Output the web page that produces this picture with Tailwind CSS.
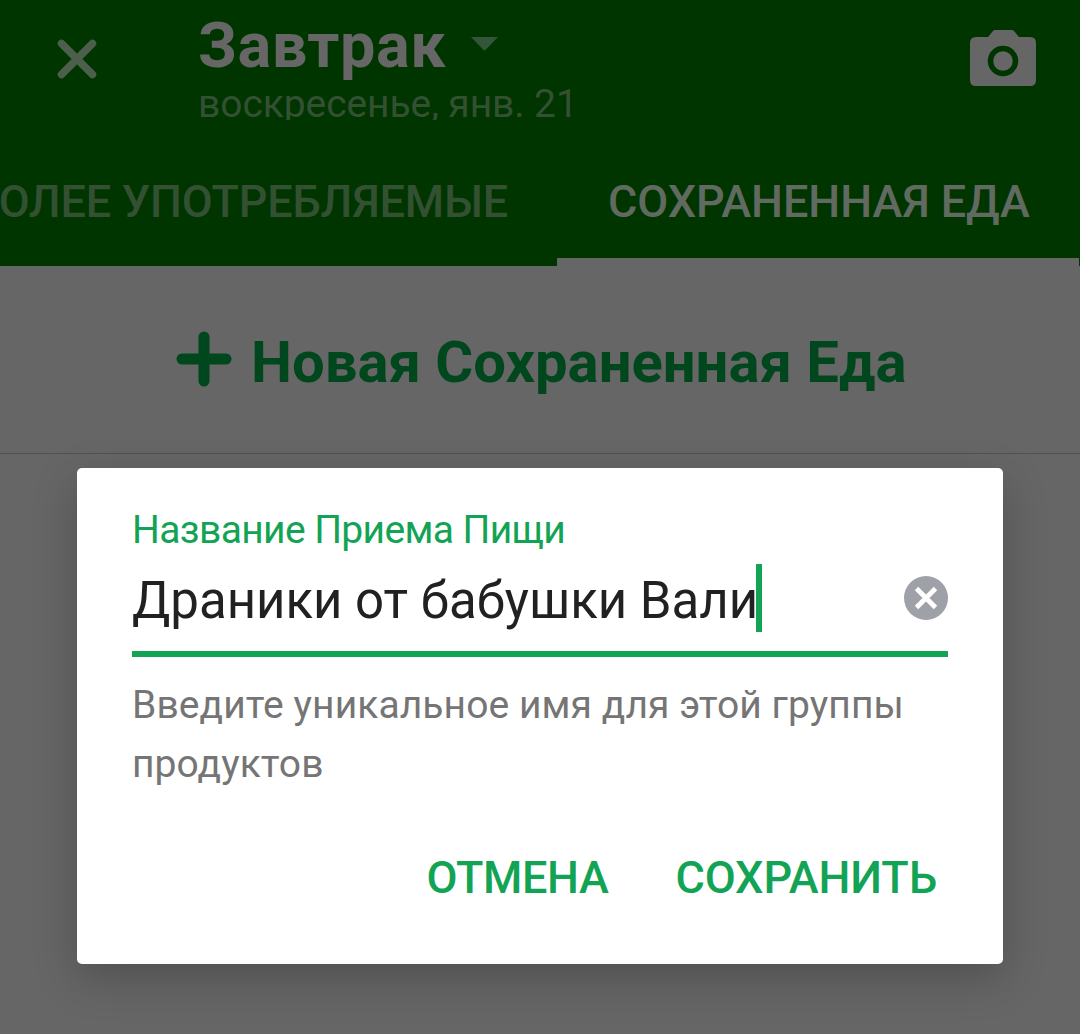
<!DOCTYPE html>
<html lang="ru">
<head>
    <meta charset="UTF-8">
    <meta name="viewport" content="width=device-width, initial-scale=1.0">
    <title>Завтрак</title>
    <script src="https://cdn.jsdelivr.net/npm/@tailwindcss/browser@4"></script>
    <style>
        body {
            font-family: Roboto, 'Noto Sans', sans-serif;
        }
    </style>
</head>
<body class="bg-[#666] h-[1034px] overflow-hidden relative">

    <!-- App bar -->
    <header class="bg-[#003500] h-[266px] flex flex-col">
        <div class="flex h-[120px] overflow-hidden">
            <button class="w-[198px] pl-[57px] pt-[39px] flex items-start">
                <svg class="w-10 h-10" viewBox="0 0 40 40" fill="none" stroke="#4c5f4c" stroke-width="7.500" stroke-linecap="round">
                    <path d="M4.500 4.500 35.500 35.500M35.500 4.500 4.500 35.500"/>
                </svg>
            </button>
            <div class="grow pt-[9px]">
                <div class="flex">
                    <h1 class="text-[63px] leading-[74px] tracking-[0.5px] font-bold text-[#666]">Завтрак</h1>
                    <svg class="w-7 h-4 ml-6 mt-[27px]" viewBox="0 0 28 16" fill="#33563a">
                        <path d="M1 1h27L14.500 15z"/>
                    </svg>
                </div>
                <p class="text-[39px] leading-[42px] tracking-[-0.08px] text-[#335033]">воскресенье, янв. 21</p>
            </div>
            <button class="pr-[44px] pt-[30px] flex items-start">
                <svg class="w-[66px] h-[56px]" viewBox="0 0 66 56">
                    <path fill="#666" d="M6 7h12l5-6q1-1 2-1h17q1 0 2 1l5 6h11q6 0 6 6v37q0 6-6 6H6q-6 0-6-6V13q0-6 6-6z"/>
                    <circle cx="33" cy="31" r="12.500" fill="none" stroke="#003500" stroke-width="5.500"/>
                </svg>
            </button>
        </div>
        <nav class="flex grow justify-end text-[45px] leading-[53px] font-medium">
            <div class="w-[557px] shrink-0 flex justify-end pr-[49px] pt-[55px] tracking-[-0.2px] text-[#335033] whitespace-nowrap">ОЛЕЕ УПОТРЕБЛЯЕМЫЕ</div>
            <div class="w-[522px] mr-px shrink-0 pl-[51px] pt-[55px] tracking-[-0.08px] text-[#606a60] border-b-8 border-[#666] whitespace-nowrap">СОХРАНЕННАЯ ЕДА</div>
        </nav>
    </header>

    <!-- New saved meal row -->
    <main>
        <button class="w-full h-[188px] flex items-start pl-[176px] pt-[65px] border-b border-[#525252] text-[#00471d]">
            <svg class="w-14 h-14 shrink-0" viewBox="0 0 56 56" fill="none" stroke="currentColor" stroke-width="11" stroke-linecap="round">
                <path d="M28 6v44M6 28h44"/>
            </svg>
            <span class="ml-[19px] -mt-[3px] text-[58px] leading-[68px] font-bold whitespace-nowrap">Новая Сохраненная Еда</span>
        </button>
    </main>

    <!-- Name dialog -->
    <div role="dialog" class="absolute left-[77px] top-[468px] w-[926px] h-[496px] bg-white rounded-[5px] shadow-[0_14px_44px_rgba(0,0,0,0.22)] pl-[55px] pr-[55px] pt-[39px]">
        <label class="block text-[39px] leading-[46px] tracking-[-0.62px] text-[#12a454]">Название Приема Пищи</label>
        <div class="flex h-[104px] border-b-[6px] border-[#12a454]">
            <span class="pt-[18px] text-[51px] leading-[60px] tracking-[-0.02px] text-[#212121] whitespace-nowrap">Драники от бабушки Вали</span>
            <span class="w-[6px] h-[68px] mt-[11px] -ml-[2px] bg-[#12a454]"></span>
            <svg class="w-11 h-11 ml-auto mt-[23px]" viewBox="0 0 44 44">
                <circle cx="22" cy="22" r="22" fill="#9fa1a9"/>
                <path d="M12.500 12.500 31.500 31.500M31.500 12.500 12.500 31.500" stroke="#fff" stroke-width="4.800"/>
            </svg>
        </div>
        <p class="mt-[19px] text-[39px] leading-[59px] tracking-[0.08px] text-[#757575]">Введите уникальное имя для этой группы продуктов</p>
        <div class="mt-[57px] flex justify-end gap-[67px] pr-[11px] text-[45px] leading-[53px] font-medium text-[#12a454]">
            <button class="tracking-[-0.4px]">ОТМЕНА</button>
            <button class="tracking-[-0.1px]">СОХРАНИТЬ</button>
        </div>
    </div>

</body>
</html>
